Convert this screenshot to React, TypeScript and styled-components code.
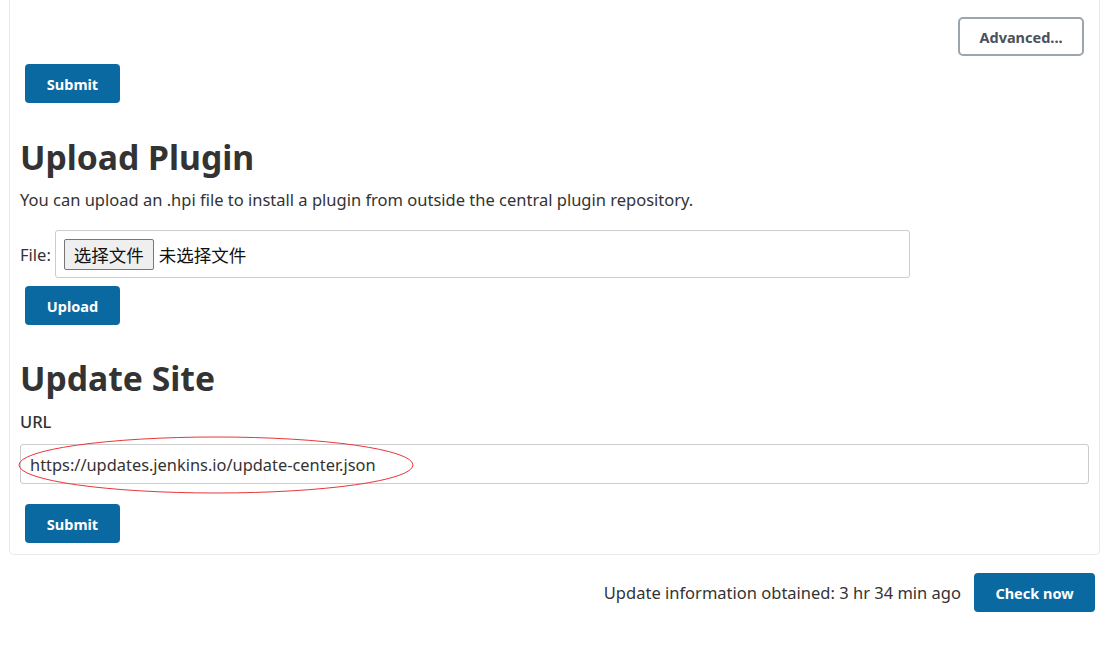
import { FC } from 'react';
import styled, { createGlobalStyle } from 'styled-components';

const GlobalStyle = createGlobalStyle`
  html, body {
    margin: 0;
    padding: 0;
    background: #ffffff;
  }
  body {
    font-family: 'Noto Sans', 'Noto Sans CJK SC', sans-serif;
    color: #333;
  }
`;

const Page = styled.div`
  width: 1117px;
  height: 663px;
  overflow: hidden;
  padding: 0 17px 0 9px;
  box-sizing: border-box;
`;

const Panel = styled.div`
  border: 1px solid #e6e8ea;
  border-top: none;
  border-radius: 0 0 5px 5px;
  padding: 17px 10px 11px 10px;
  display: flex;
  flex-direction: column;
`;

const TopRow = styled.div`
  display: flex;
  justify-content: flex-end;
  padding-right: 5px;
`;

const OutlineButton = styled.button`
  width: 126px;
  height: 39px;
  border: 2px solid #9aa5ae;
  border-radius: 5px;
  background: #fff;
  color: #4b505a;
  font-family: inherit;
  font-size: 14.5px;
  font-weight: 700;
  cursor: pointer;
`;

const PrimaryButton = styled.button<{ $width?: number; $top?: number }>`
  width: ${(p) => p.$width ?? 95}px;
  height: 39px;
  margin-top: ${(p) => p.$top ?? 0}px;
  margin-left: 5px;
  border: none;
  border-radius: 4px;
  background: #0b69a1;
  color: #fff;
  font-family: inherit;
  font-size: 14.5px;
  font-weight: 700;
  cursor: pointer;
  align-self: flex-start;
  flex-shrink: 0;
`;

const Heading = styled.h1<{ $top: number }>`
  margin: ${(p) => p.$top}px 0 0;
  font-size: 33.7px;
  line-height: 44px;
  font-weight: 700;
  color: #333;
`;

const Text = styled.p`
  margin: 9px 0 0;
  font-size: 16.5px;
  line-height: 24px;
  color: #333;
`;

const FileRow = styled.div`
  display: flex;
  align-items: center;
  gap: 4px;
  margin-top: 18px;
  font-size: 16.5px;
`;

const FileBox = styled.div`
  width: 855px;
  height: 48px;
  border: 1px solid #cccccc;
  border-radius: 3px;
  box-sizing: border-box;
  display: flex;
  align-items: center;
  padding-left: 8px;
  gap: 5px;
  font-family: 'Noto Sans CJK SC', sans-serif;
  font-size: 17.5px;
  color: #111;
`;

const ChooseButton = styled.span`
  height: 31px;
  padding: 0 9px;
  border: 1px solid #767676;
  border-radius: 2px;
  background: #efefef;
  box-sizing: border-box;
  display: flex;
  align-items: center;
`;

const Label = styled.div`
  margin-top: 10px;
  font-size: 16.5px;
  font-weight: 500;
  line-height: 24px;
`;

const UrlWrap = styled.div`
  position: relative;
  margin-top: 10px;
`;

const UrlInput = styled.div`
  height: 40px;
  border: 1px solid #cccccc;
  border-radius: 3px;
  box-sizing: border-box;
  display: flex;
  align-items: center;
  padding-left: 9px;
  font-size: 16.4px;
`;

const Mark = styled.svg`
  position: absolute;
  left: -3px;
  top: -8px;
  pointer-events: none;
`;

const Footer = styled.div`
  display: flex;
  justify-content: flex-end;
  align-items: center;
  gap: 8px;
  margin-top: 18px;
  padding-right: 5px;
  font-size: 16.5px;
  color: #333;
`;

const App: FC = () => {
  return (
    <>
      <GlobalStyle />
      <Page>
        <Panel>
          <TopRow>
            <OutlineButton>Advanced...</OutlineButton>
          </TopRow>
          <PrimaryButton $top={8}>Submit</PrimaryButton>

          <Heading $top={32}>Upload Plugin</Heading>
          <Text>You can upload an .hpi file to install a plugin from outside the central plugin repository.</Text>
          <FileRow>
            File:
            <FileBox>
              <ChooseButton>选择文件</ChooseButton>
              未选择文件
            </FileBox>
          </FileRow>
          <PrimaryButton $top={8}>Upload</PrimaryButton>

          <Heading $top={31}>Update Site</Heading>
          <Label>URL</Label>
          <UrlWrap>
            <UrlInput>https://updates.jenkins.io/update-center.json</UrlInput>
            <Mark width="402" height="62" viewBox="0 0 402 62">
              <ellipse cx="199" cy="29" rx="197" ry="28" fill="none" stroke="#e8363a" strokeWidth="1" />
            </Mark>
          </UrlWrap>
          <PrimaryButton $top={20}>Submit</PrimaryButton>
        </Panel>
        <Footer>
          Update information obtained: 3 hr 34 min ago
          <PrimaryButton $width={121}>Check now</PrimaryButton>
        </Footer>
      </Page>
    </>
  );
};

export default App;
